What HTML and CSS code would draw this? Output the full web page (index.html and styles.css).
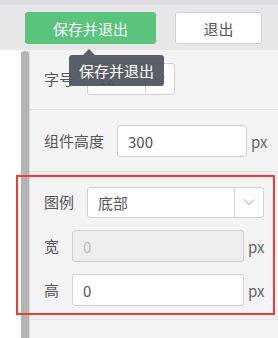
FILE: index.html
```html
<!DOCTYPE html>
<html lang="zh-CN">
<head>
  <meta charset="UTF-8">
  <title>组件设置</title>
  <link rel="stylesheet" href="styles.css">
</head>
<body>
  <header class="toolbar">
    <button class="btn btn-save">保存并退出</button>
    <button class="btn btn-exit">退出</button>
  </header>

  <main class="body">
    <div class="gutter"></div>
    <div class="scrollbar"></div>
    <div class="panel">
      <div class="section section-first">
        <div class="row">
          <span class="label label-2">字号</span>
          <div class="select select-small">
            <span class="select-value">12</span>
            <span class="select-arrow"><svg width="12" height="8" viewBox="0 0 12 8"><path d="M1 1.5l5 5 5-5" fill="none" stroke="#c8c8c8" stroke-width="1.4"/></svg></span>
          </div>
        </div>
      </div>

      <div class="section">
        <div class="row">
          <span class="label label-4">组件高度</span>
          <input class="input input-height" value="300">
          <span class="unit">px</span>
        </div>
      </div>

      <div class="section section-legend">
        <div class="row">
          <span class="label label-2">图例</span>
          <div class="select select-wide">
            <span class="select-value">底部</span>
            <span class="select-arrow"><svg width="12" height="8" viewBox="0 0 12 8"><path d="M1 1.5l5 5 5-5" fill="none" stroke="#c8c8c8" stroke-width="1.4"/></svg></span>
          </div>
        </div>
        <div class="row">
          <span class="label label-1">宽</span>
          <input class="input input-size" value="0" disabled>
          <span class="unit">px</span>
        </div>
        <div class="row">
          <span class="label label-1">高</span>
          <input class="input input-size" value="0">
          <span class="unit">px</span>
        </div>
      </div>

      <div class="section section-last"></div>
    </div>

    <!-- annotation + tooltip float over the form -->
    <div class="highlight"></div>
    <div class="tooltip">保存并退出</div>
  </main>
</body>
</html>
```

FILE: styles.css
```css
/* Base */
body {
  margin: 0;
  width: 278px;
  height: 338px;
  overflow: hidden;
  background: #fff;
  font-family: "Noto Sans CJK SC", "Noto Sans", sans-serif;
  font-size: 15px;
  color: #555;
}

/* Toolbar */
.toolbar {
  display: flex;
  align-items: flex-start;
  height: 45px;
  padding-left: 25px;
  border-top: 5px solid #dddde1;
  background: #e8e8e8;
}

.btn {
  height: 32px;
  margin-top: 7px;
  border-radius: 3px;
  font-family: inherit;
  font-size: 15px;
  padding: 0;
}

.btn-save {
  width: 131px;
  border: none;
  background: #59c47c;
  color: #fff;
}

.btn-exit {
  width: 87px;
  margin-left: 19px;
  border: 1px solid #cfcfcf;
  background: #fff;
  color: #555;
}

/* Body */
.body {
  position: relative;
  display: flex;
  height: 288px;
}

.gutter {
  width: 21px;
}

.scrollbar {
  width: 8px;
  background: #b4b4b4;
  border-radius: 3px 3px 0 0;
  margin-top: 1px;
}

.panel {
  flex: 1;
  background: #f4f4f4;
  border-left: 1px solid #dedede;
}

.section {
  display: flex;
  flex-direction: column;
  gap: 12px;
  padding: 15px 0 14px 14px;
  border-bottom: 1px solid #e2e2e2;
}

.section-first {
  padding-top: 13px;
}

.section-legend {
  padding-top: 14px;
  padding-bottom: 13px;
}

.section-last {
  border-bottom: none;
}

.row {
  display: flex;
  align-items: center;
  height: 32px;
}

.label {
  flex: none;
  line-height: 20px;
}

.label-1 { width: 28px; }
.label-2 { width: 43px; }
.label-4 { width: 73px; }

/* Inputs */
.input {
  box-sizing: border-box;
  height: 32px;
  padding: 0 10px;
  border: 1px solid #d0d0d0;
  border-radius: 3px;
  background: #fff;
  font-family: inherit;
  font-size: 15px;
  color: #555;
}

.input:disabled {
  background: #eee;
  color: #bbb;
}

.input-height { width: 130px; }
.input-size { width: 172px; }

.unit {
  margin-left: 4px;
  color: #666;
}

/* Select */
.select {
  box-sizing: border-box;
  display: flex;
  height: 32px;
  border: 1px solid #d0d0d0;
  border-radius: 3px;
  background: #fff;
}

.select-small { width: 88px; }
.select-wide { width: 177px; height: 31px; }

.select-value {
  flex: 1;
  padding-left: 10px;
  line-height: 30px;
}

.select-arrow {
  display: flex;
  align-items: center;
  justify-content: center;
  width: 28px;
  border-left: 1px solid #d8d8d8;
}

/* Overlays */
.highlight {
  position: absolute;
  left: 16px;
  top: 125px;
  width: 255px;
  height: 136px;
  border: 2px solid #fc3535;
}

.tooltip {
  position: absolute;
  left: 69px;
  top: 5px;
  width: 95px;
  height: 31px;
  border-radius: 3px;
  background: rgba(80, 83, 93, 0.93);
  color: #fff;
  font-size: 15px;
  line-height: 31px;
  text-align: center;
}

.tooltip::before {
  content: "";
  position: absolute;
  left: 14px;
  top: -6px;
  border: 6px solid transparent;
  border-top: none;
  border-bottom-color: rgba(80, 83, 93, 0.93);
}
```
